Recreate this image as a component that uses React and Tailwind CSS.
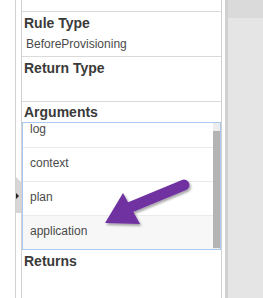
import React from 'react';

const args = ['log', 'context', 'plan', 'application'];

const Header = ({ children }) => (
  <h3 className="pl-[2px] text-[14px] font-bold leading-[20px] text-[#3a3a3a]">{children}</h3>
);

const App = () => {
  return (
    <div className="relative flex h-[298px] w-[263px] overflow-hidden bg-white font-['Liberation_Sans',Arial,sans-serif]">
      {/* left gutter with collapse handle */}
      <div className="h-full w-[16px] shrink-0 border-r border-[#d2d2d2]" />
      <div className="w-[5px] shrink-0" />

      {/* properties panel */}
      <div className="flex h-full w-[201px] shrink-0 flex-col border-x border-[#d0d0d0]">
        <div className="h-[12px] border-b border-[#dadada]" />

        <div className="h-[45px] border-b border-[#dadada] pt-px">
          <Header>Rule Type</Header>
          <div className="mt-[3px] pl-[4px] text-[12px] leading-[16px] text-[#4a4a4a]">BeforeProvisioning</div>
        </div>

        <div className="h-[45px] border-b border-[#dadada] pt-px">
          <Header>Return Type</Header>
        </div>

        <div>
          <Header>Arguments</Header>
          <div className="flex h-[128px] w-[199px] overflow-hidden border border-[#a9c9ef]">
            <div className="flex-1 overflow-hidden">
              <div className="-mt-[9px]">
                {args.map((a) => (
                  <div
                    key={a}
                    className={`h-[34px] border-b border-[#ebebeb] pl-[7px] pt-[7px] text-[12px] leading-[16px] text-[#4a4a4a] ${a === 'application' ? 'bg-[#f7f7f7]' : 'bg-white'}`}
                  >
                    {a}
                  </div>
                ))}
              </div>
            </div>
            <div className="flex w-[7px] flex-col bg-[#ececec]">
              <div className="h-[8px]" />
              <div className="flex-1 bg-[#b4b4b4]" />
              <div className="h-[1px]" />
            </div>
          </div>
        </div>

        <div className="mt-[1px]">
          <Header>Returns</Header>
        </div>
      </div>

      <div className="w-[3px] shrink-0" />
      <div className="h-full w-[3px] shrink-0 bg-[#d0d0d0]" />
      <div className="flex h-full flex-1 flex-col">
        <div className="h-[18px] bg-[#dadada]" />
        <div className="flex-1 bg-[#e5e5e5]" />
      </div>

      {/* collapse handle */}
      <div className="absolute left-[16px] top-[177px] h-[36px] w-[5px] bg-[#d6d6d6] [clip-path:polygon(0_0,100%_5px,100%_100%,0_100%)]" />
      <div className="absolute left-[16px] top-[193px] h-0 w-0 border-y-[3px] border-l-[3px] border-y-transparent border-l-[#222]" />

      {/* callout arrow */}
      <svg className="pointer-events-none absolute left-0 top-0" width="263" height="298" viewBox="0 0 263 298">
        <defs>
          <filter id="sh" x="-20%" y="-20%" width="140%" height="140%">
            <feDropShadow dx="1.5" dy="2" stdDeviation="1.2" floodColor="#000" floodOpacity="0.35" />
          </filter>
        </defs>
        <g filter="url(#sh)" fill="#7030a0">
          <line x1="184" y1="185" x2="126" y2="209" stroke="#7030a0" strokeWidth="11" strokeLinecap="round" />
          <polygon points="105,223 123,193 140,224" />
        </g>
      </svg>
    </div>
  );
};

export default App;
